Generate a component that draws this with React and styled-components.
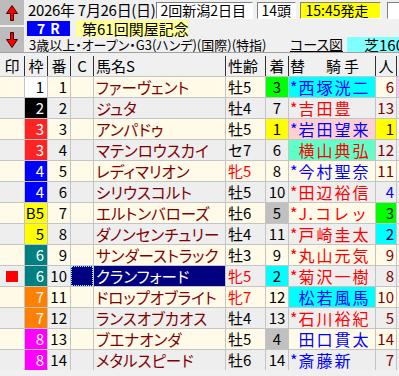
import React from "react";
import styled, { createGlobalStyle } from "styled-components";

const GlobalStyle = createGlobalStyle`
  html, body { margin: 0; padding: 0; background: #f0f0f0; }
  body { font-family: "Noto Sans CJK JP", "Noto Sans", sans-serif; }
`;

const Screen = styled.div`
  width: 399px;
  height: 376px;
  overflow: hidden;
  background: #f0f0f0;
  color: #000;
  font-size: 15px;
`;

/* ---------- race header ---------- */

const Header = styled.div`
  display: flex;
  height: 52px;
  border-bottom: 1px solid #a0a0a0;
`;

const Pager = styled.div`
  width: 24px;
  display: flex;
  flex-direction: column;
  gap: 2px;
`;

const PageButton = styled.div`
  flex: 1;
  background: #bcbcbc;
  display: flex;
  align-items: center;
  justify-content: center;
`;

const Info = styled.div`
  flex: 1;
  display: flex;
  flex-direction: column;
  padding-left: 3px;
  min-width: 0;
`;

const InfoLine = styled.div`
  display: flex;
  align-items: center;
  height: ${(p) => p.$h}px;
  white-space: nowrap;
`;

const DateText = styled.div`
  width: 129px;
  padding-left: 1px;
  font-size: 15px;
  line-height: 18px;
  letter-spacing: -0.3px;
`;

const Field = styled.div`
  width: ${(p) => p.$w}px;
  margin-left: ${(p) => p.$ml || 0}px;
  height: 17px;
  box-sizing: border-box;
  background: ${(p) => p.$bg || "#fff"};
  border-top: 1px solid #808080;
  border-left: 1px solid #808080;
  border-bottom: 1px solid #fff;
  border-right: 1px solid #fff;
  padding-left: ${(p) => p.$pl || 4}px;
  font-size: 14px;
  line-height: 15px;
  flex-shrink: 0;
`;

const RaceNo = styled.div`
  width: 43px;
  height: 15px;
  background: #0000ff;
  color: #fff;
  font-weight: 700;
  font-size: 14px;
  line-height: 15px;
  text-align: center;
  letter-spacing: 5px;
  text-indent: 5px;
`;

const RaceTitle = styled.div`
  width: 112px;
  height: 17px;
  margin-left: 6px;
  background: #ffff99;
  padding-left: 6px;
  box-sizing: border-box;
  font-size: 15px;
  line-height: 17px;
`;

const Conditions = styled.div`
  flex: 1;
  padding-left: 2px;
  font-size: 13px;
  line-height: 15px;
  font-feature-settings: "palt";
`;

const CourseLink = styled.span`
  font-size: 14px;
  line-height: 15px;
  text-decoration: underline;
  font-feature-settings: "palt";
  margin-right: 4px;
`;

const CourseBox = styled.div`
  width: 52px;
  height: 15px;
  background: #80ffff;
  padding-left: 17px;
  box-sizing: border-box;
  font-size: 15px;
  line-height: 15px;
  overflow: hidden;
`;

/* ---------- entry table ---------- */

const Table = styled.div`
  margin-top: 3px;
  display: flex;
  flex-direction: column;
  gap: 1px;
  background: #c4c4c4;
`;

const Row = styled.div`
  --row: ${(p) => p.$bg};
  display: grid;
  grid-template-columns: 24px 22px 22px 22px 131px 39px 22px 86px 20px 1fr;
  column-gap: 1px;
  height: 20px;
  background: ${(p) => p.$line || "#c4c4c4"};
`;

const Cell = styled.div`
  background: ${(p) => p.$bg || "var(--row)"};
  color: ${(p) => p.$color || "#000"};
  text-align: ${(p) => p.$align || "left"};
  padding: 0 ${(p) => p.$pr || 0}px 0 ${(p) => p.$pl || 0}px;
  font-size: ${(p) => p.$fs || 15}px;
  line-height: 20px;
  white-space: nowrap;
  overflow: hidden;
`;

const HeadCell = styled(Cell)`
  letter-spacing: ${(p) => p.$ls || 0}px;
`;

const HorseName = styled(Cell)`
  font-size: 15.5px;
  font-feature-settings: "palt";
  padding-left: 2px;
  ${(p) => p.$selected && "background: #000080; color: #fff;"}
`;

const CheckCell = styled(Cell)`
  ${(p) => p.$selected && "background: #000080; outline: 1px dotted #8ff; outline-offset: -1px;"}
`;

const MarkCell = styled(Cell)`
  display: flex;
  align-items: center;
  justify-content: center;
`;

const RedMark = styled.span`
  width: 12px;
  height: 11px;
  background: #ff0000;
`;

const Jockey = styled(Cell)`
  font-size: 16px;
  letter-spacing: 2px;
  padding-left: 1px;
`;

const Star = styled.span`
  letter-spacing: 1px;
  visibility: ${(p) => (p.$hide ? "hidden" : "visible")};
`;

const WAKU = {
  1: ["#ffffff", "#000"],
  2: ["#000000", "#fff"],
  3: ["#ff2424", "#fff"],
  4: ["#0000ff", "#fff"],
  5: ["#ffff00", "#000"],
  6: ["#008080", "#fff"],
  7: ["#ff8000", "#fff"],
  8: ["#ff00ff", "#fff"],
};

const BLUE = "#0000ff";
const RED = "#ff0000";
const MAROON = "#800000";

const horses = [
  { w: 1, no: 1, name: "ファーヴェント", sex: "牡5", ch: "3", chBg: "#00ff00", star: true, jk: "西塚洸二", jc: BLUE, jBg: "#00ffff", pop: "6" },
  { w: 2, no: 2, name: "ジュタ", sex: "牡4", ch: "7", star: true, jk: "吉田豊", jc: RED, pop: "13" },
  { w: 3, no: 3, name: "アンパドゥ", sex: "牡5", ch: "1", chBg: "#ffff00", star: true, jk: "岩田望来", jc: BLUE, jBg: "#ffd0d0", pop: "1", popBg: "#ffff00", popC: "#400000" },
  { w: 3, no: 4, name: "マテンロウスカイ", sex: "セ7", ch: "6", jk: "横山典弘", jc: RED, jBg: "#60ffc8", pop: "12" },
  { w: 4, no: 5, name: "レディマリオン", sex: "牝5", ch: "8", star: true, jk: "今村聖奈", jc: BLUE, pop: "11" },
  { w: 4, no: 6, name: "シリウスコルト", sex: "牡5", ch: "10", star: true, jk: "田辺裕信", jc: RED, pop: "4", popC: BLUE },
  { w: 5, wl: "B5", no: 7, name: "エルトンバローズ", sex: "牡6", ch: "5", chBg: "#c0c0c0", star: true, jk: "J.コレッ", jc: RED, pop: "3", popBg: "#00ff00", popC: "#002000" },
  { w: 5, no: 8, name: "ダノンセンチュリー", sex: "牡4", ch: "11", star: true, jk: "戸崎圭太", jc: RED, pop: "2", popBg: "#00ffff", popC: "#000060" },
  { w: 6, no: 9, name: "サンダーストラック", sex: "牡3", ch: "9", star: true, jk: "丸山元気", jc: RED, pop: "9" },
  { w: 6, no: 10, name: "クランフォード", sex: "牝5", ch: "2", chBg: "#00ffff", star: true, jk: "菊沢一樹", jc: RED, pop: "8", selected: true },
  { w: 7, no: 11, name: "ドロップオブライト", sex: "牝7", ch: "12", jk: "松若風馬", jc: BLUE, jBg: "#00ffff", pop: "10" },
  { w: 7, no: 12, name: "ランスオブカオス", sex: "牡4", ch: "13", star: true, jk: "石川裕紀", jc: RED, pop: "5" },
  { w: 8, no: 13, name: "ブエナオンダ", sex: "牡5", ch: "4", chBg: "#c0c0c0", jk: "田口貫太", jc: BLUE, pop: "14" },
  { w: 8, no: 14, name: "メタルスピード", sex: "牡6", ch: "14", star: true, jk: "斎藤新", jc: BLUE, pop: "7" },
];

const UpArrow = () => (
  <svg width="12" height="16" viewBox="0 0 12 16">
    <path d="M6 0.5 L11.5 8.5 L7.5 8.5 L7.5 15.5 L4.5 15.5 L4.5 8.5 L0.5 8.5 Z" fill="#ff0000" stroke="#400000" strokeWidth="1" />
  </svg>
);

const DownArrow = () => (
  <svg width="12" height="16" viewBox="0 0 12 16">
    <path d="M6 15.5 L11.5 7.5 L7.5 7.5 L7.5 0.5 L4.5 0.5 L4.5 7.5 L0.5 7.5 Z" fill="#ff0000" stroke="#400000" strokeWidth="1" />
  </svg>
);

const App = () => {
  return (
    <Screen>
      <GlobalStyle />
      <Header>
        <Pager>
          <PageButton>
            <UpArrow />
          </PageButton>
          <PageButton>
            <DownArrow />
          </PageButton>
        </Pager>
        <Info>
          <InfoLine $h={20}>
            <DateText>2026年 7月26日(日)</DateText>
            <Field $w={97}>2回新潟2日目</Field>
            <Field $w={39} $ml={4}>14頭</Field>
            <Field $w={81} $ml={4} $bg="#ffff00" $pl={5}>15:45発走</Field>
            <Field $w={20} $ml={6} />
          </InfoLine>
          <InfoLine $h={17}>
            <RaceNo>7R</RaceNo>
            <RaceTitle>第61回関屋記念</RaceTitle>
          </InfoLine>
          <InfoLine $h={15}>
            <Conditions>3歳以上・オープン・G3(ハンデ)(国際)(特指)</Conditions>
            <CourseLink>コース図</CourseLink>
            <CourseBox>芝1600</CourseBox>
          </InfoLine>
        </Info>
      </Header>

      <Table>
        <Row $bg="#f0f0f0" $line="#303030">
          <HeadCell $align="center">印</HeadCell>
          <HeadCell $align="center">枠</HeadCell>
          <HeadCell $align="center">番</HeadCell>
          <HeadCell $align="center">C</HeadCell>
          <HeadCell $pl={2}>馬名S</HeadCell>
          <HeadCell $pl={2}>性齢</HeadCell>
          <HeadCell $align="center">着</HeadCell>
          <HeadCell $pl={1} $ls={3}>替　騎手</HeadCell>
          <HeadCell $align="center">人</HeadCell>
          <HeadCell />
        </Row>
        {horses.map((h, i) => {
          const [wBg, wFg] = WAKU[h.w];
          return (
            <Row key={h.no} $bg={i % 2 === 0 ? "#fffbe8" : "#eeeeee"}>
              <MarkCell>{h.selected && <RedMark />}</MarkCell>
              <Cell $bg={wBg} $color={wFg} $align="right" $pr={3}>
                {h.wl || h.w}
              </Cell>
              <Cell $align="right" $pr={3}>{h.no}</Cell>
              <CheckCell $selected={h.selected} />
              <HorseName $selected={h.selected} $color={MAROON}>
                {h.name}
              </HorseName>
              <Cell $pl={2} $color={h.sex.startsWith("牝") ? RED : "#000"}>
                {h.sex}
              </Cell>
              <Cell $align="center" $bg={h.chBg}>{h.ch}</Cell>
              <Jockey $bg={h.jBg} $color={h.jc}>
                <Star $hide={!h.star}>*</Star>
                {h.jk}
              </Jockey>
              <Cell $align="right" $pr={2} $bg={h.popBg} $color={h.popC || MAROON}>
                {h.pop}
              </Cell>
              <Cell $bg={i === 0 ? "#f4c4f4" : undefined} />
            </Row>
          );
        })}
      </Table>
    </Screen>
  );
};

export default App;
